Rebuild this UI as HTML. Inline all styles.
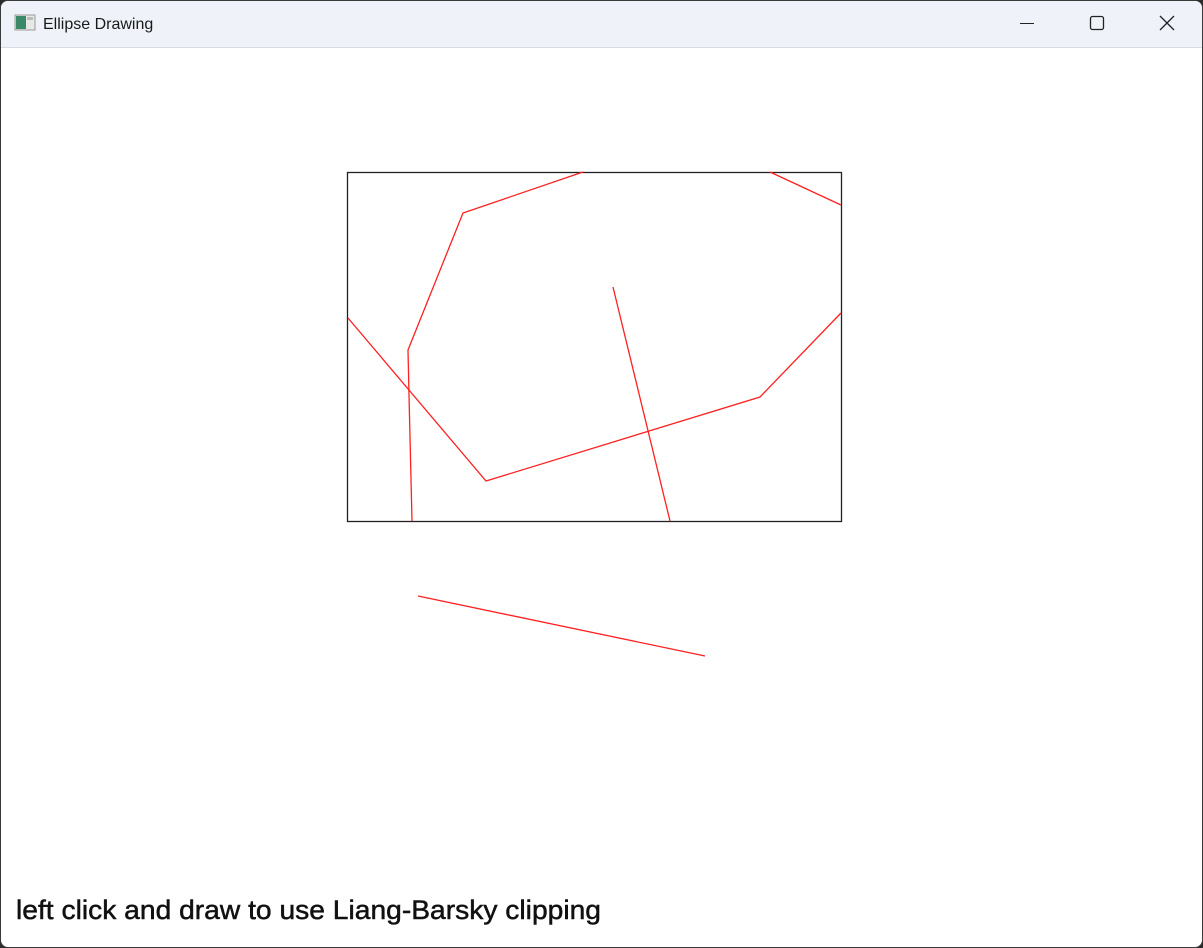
<!DOCTYPE html>
<html><head><style>
html,body{margin:0;padding:0;width:1203px;height:948px;overflow:hidden;background:#2b2b2b;}
</style></head><body>
<svg width="1203" height="948" xmlns="http://www.w3.org/2000/svg" style="display:block">
<rect x="0" y="0" width="1203" height="948" rx="8" fill="#3a3a3a"/>
<rect x="1" y="1" width="1201" height="946" rx="7" fill="#ffffff"/>
<path d="M1 47 V8 a7 7 0 0 1 7 -7 H1195 a7 7 0 0 1 7 7 V47 Z" fill="#eff3f9"/>
<line x1="1" y1="47.5" x2="1202" y2="47.5" stroke="#d8dce2"/>
<rect x="15" y="15" width="20" height="15" fill="#e8e8e8" stroke="#999" stroke-width="1"/>
<rect x="16" y="16" width="10" height="13" fill="#3a8a6a"/>
<rect x="27" y="17" width="6" height="3" fill="#bbb"/>
<text x="43" y="29" font-family="Liberation Sans, sans-serif" font-size="16" fill="#1a1a1a">Ellipse Drawing</text>
<line x1="1020" y1="23.5" x2="1034" y2="23.5" stroke="#222" stroke-width="1"/>
<rect x="1090.5" y="16.5" width="13" height="13" rx="2" fill="none" stroke="#222" stroke-width="1.3"/>
<path d="M1160 16 L1174 30 M1174 16 L1160 30" stroke="#222" stroke-width="1.3"/>
<rect x="347.5" y="172.5" width="494" height="349" fill="none" stroke="#222" stroke-width="1.3"/>
<g stroke="#ff2020" stroke-width="1.3" fill="none">
<polyline points="412,521 409,395 408,350 463,213 583,172"/>
<polyline points="770,172 841,205"/>
<polyline points="348,318 486,481 760,397 841,313"/>
<line x1="613" y1="287" x2="670" y2="521"/>
<line x1="418" y1="596" x2="705" y2="656"/>
</g>
<text x="16" y="919" font-family="Liberation Sans, sans-serif" font-size="27" fill="#111" stroke="#111" stroke-width="0.5" textLength="585" lengthAdjust="spacingAndGlyphs">left click and draw to use Liang-Barsky clipping</text>
</svg>
</body></html>
